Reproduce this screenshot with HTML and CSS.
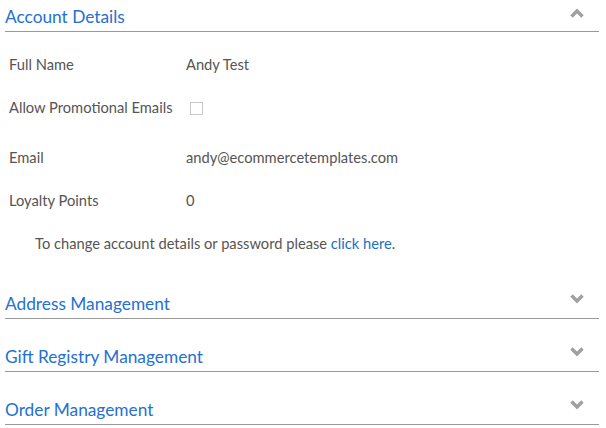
FILE: index.html
```html
<!DOCTYPE html>
<html>
<head>
<meta charset="utf-8">
<link rel="stylesheet" href="styles.css">
</head>
<body>
<div class="page">
  <div class="section-head">
    <span class="title">Account Details</span>
    <svg class="chev" width="14" height="10" viewBox="0 0 14 10"><path d="M1.5 8.5 L7 3 L12.5 8.5" fill="none" stroke="#a0a0a0" stroke-width="3.4"/></svg>
  </div>
  <div class="account-body">
    <div class="grid">
      <div class="label">Full Name</div><div class="value">Andy Test</div>
      <div class="label tall">Allow Promotional Emails</div><div class="value tall"><span class="checkbox"></span></div>
      <div class="label">Email</div><div class="value">andy@ecommercetemplates.com</div>
      <div class="label">Loyalty Points</div><div class="value">0</div>
    </div>
    <p class="note">To change account details or password please <a href="#">click here</a>.</p>
  </div>
  <div class="section-head next">
    <span class="title">Address Management</span>
    <svg class="chev" width="14" height="10" viewBox="0 0 14 10"><path d="M1.5 1.5 L7 7 L12.5 1.5" fill="none" stroke="#a0a0a0" stroke-width="3.4"/></svg>
  </div>
  <div class="section-head next">
    <span class="title">Gift Registry Management</span>
    <svg class="chev" width="14" height="10" viewBox="0 0 14 10"><path d="M1.5 1.5 L7 7 L12.5 1.5" fill="none" stroke="#a0a0a0" stroke-width="3.4"/></svg>
  </div>
  <div class="section-head next">
    <span class="title">Order Management</span>
    <svg class="chev" width="14" height="10" viewBox="0 0 14 10"><path d="M1.5 1.5 L7 7 L12.5 1.5" fill="none" stroke="#a0a0a0" stroke-width="3.4"/></svg>
  </div>
</div>
</body>
</html>
```
FILE: styles.css
```css
html, body { margin: 0; padding: 0; background: #fff; }
body { font-family: Lato, "Liberation Sans", sans-serif; color: #555; font-size: 14.7px; }
.page { padding: 1px 7px 0 5px; }
.section-head {
  height: 31px;
  box-sizing: border-box;
  display: flex;
  justify-content: space-between;
  align-items: flex-end;
  border-bottom: 1px solid #999;
  padding: 0 15px 4px 0;
}
.section-head .title { color: #2470d3; font-size: 17.3px; line-height: 20px; }
.section-head .chev { align-self: flex-start; margin-top: 7px; }
.section-head.next { height: 32px; margin-top: 21px; }
.section-head.next .chev { margin-top: 7px; }
.account-body { padding: 22px 0 0 4px; }
.grid { display: grid; grid-template-columns: 177px auto; row-gap: 23px; line-height: 20px; }
.tall { min-height: 27px; }
.checkbox { display: block; width: 11px; height: 11px; border: 1px solid #c8c8c8; margin: 5px 0 0 4px; }
.note { margin: 23px 0 0 26px; line-height: 20px; }
.note a { color: #1a6fc8; text-decoration: none; }
.account-body + .section-head { margin-top: 34px; }
```
